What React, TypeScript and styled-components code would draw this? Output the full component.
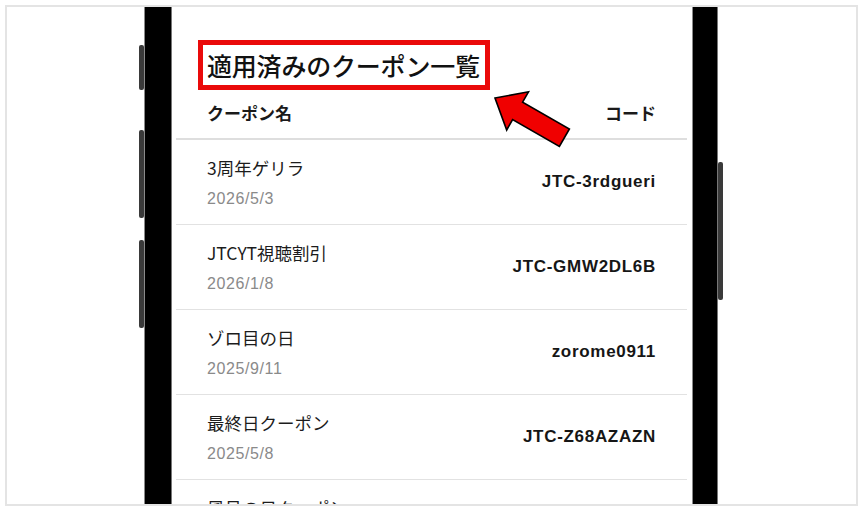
import styled, { createGlobalStyle } from 'styled-components';

const coupons = [
  { name: '3周年ゲリラ', date: '2026/5/3', code: 'JTC-3rdgueri' },
  { name: 'JTCYT視聴割引', date: '2026/1/8', code: 'JTC-GMW2DL6B' },
  { name: 'ゾロ目の日', date: '2025/9/11', code: 'zorome0911' },
  { name: '最終日クーポン', date: '2025/5/8', code: 'JTC-Z68AZAZN' },
  { name: '風呂の日クーポン', date: '2025/2/6', code: 'JTC-FURO0206' },
];

const GlobalStyle = createGlobalStyle`
  html, body {
    margin: 0;
    padding: 0;
    background: #ffffff;
  }
  body {
    font-family: "Noto Sans CJK JP", "Noto Sans", sans-serif;
    color: #111;
  }
`;

const Frame = styled.div`
  box-sizing: border-box;
  margin: 5px 0 0 5px;
  width: 853px;
  height: 501px;
  border: 2px solid #e4e4e4;
  overflow: hidden;
  display: flex;
  padding-left: 132px;
`;

const Rail = styled.div<{ $top: number }>`
  width: 5px;
  display: flex;
  flex-direction: column;
  padding-top: ${({ $top }) => $top}px;
`;

const SideButton = styled.div<{ $height: number; $gap?: number }>`
  height: ${({ $height }) => $height}px;
  margin-top: ${({ $gap }) => $gap ?? 0}px;
  background: #3a3a3a;
  border-radius: 2px;
`;

const Bezel = styled.div<{ $width: number }>`
  width: ${({ $width }) => $width}px;
  height: 100%;
  background: #000;
  box-shadow: inset 1px 0 0 #8a8a8a, inset -1px 0 0 #777;
`;

const Screen = styled.div`
  position: relative;
  width: 520px;
  height: 100%;
  background: #fff;
  display: flex;
  flex-direction: column;
  padding-top: 33px;
  box-sizing: border-box;
  overflow: hidden;
`;

const TitleBox = styled.div`
  flex-shrink: 0;
  align-self: flex-start;
  margin-left: 26px;
  box-sizing: border-box;
  width: 292px;
  height: 50px;
  border: 5px solid #ea0a0a;
  padding: 0 4px;
`;

const Title = styled.h1`
  margin: 0;
  font-size: 25px;
  font-weight: 500;
  line-height: 40px;
  white-space: nowrap;
  letter-spacing: -0.2px;
`;

const Arrow = styled.svg`
  position: absolute;
  left: 318px;
  top: 75px;
  overflow: visible;
`;

const HeaderRow = styled.div`
  flex-shrink: 0;
  margin: 0 5px 0 4px;
  height: 50px;
  box-sizing: border-box;
  padding: 0 31px 3px;
  display: flex;
  justify-content: space-between;
  align-items: center;
  border-bottom: 2px solid #dedede;
  font-size: 17px;
  font-weight: 700;
  color: #1a1a1a;
`;

const Row = styled.div`
  margin: 0 5px 0 4px;
  height: 85px;
  flex-shrink: 0;
  box-sizing: border-box;
  padding: 0 31px;
  display: flex;
  justify-content: space-between;
  align-items: center;
  border-bottom: 1px solid #e2e2e2;
`;

const Info = styled.div`
  display: flex;
  flex-direction: column;
  gap: 8px;
  padding-top: 2px;
`;

const Name = styled.div`
  font-size: 17.5px;
  line-height: 24px;
  color: #1c1c1c;
`;

const DateText = styled.div`
  font-family: "Liberation Sans", "Noto Sans CJK JP", sans-serif;
  font-size: 16px;
  line-height: 22px;
  letter-spacing: 0.6px;
  color: #8a8a8a;
`;

const Code = styled.div`
  font-family: "Liberation Sans", "Noto Sans CJK JP", sans-serif;
  font-size: 17px;
  font-weight: 700;
  letter-spacing: 0.7px;
  color: #161616;
`;

export default function App() {
  return (
    <>
      <GlobalStyle />
      <Frame>
        <Rail $top={38}>
          <SideButton $height={45} />
          <SideButton $height={88} $gap={40} />
          <SideButton $height={88} $gap={22} />
        </Rail>
        <Bezel $width={28} />
        <Screen>
          <TitleBox>
            <Title>適用済みのクーポン一覧</Title>
          </TitleBox>
          <Arrow width="80" height="70" viewBox="0 0 80 70">
            <polygon
              points="5,16 38.5,9.8 32.6,20.2 79.4,47 69.4,64.4 22.6,37.6 16.7,48"
              fill="#f00000"
              stroke="#000"
              strokeWidth="1.6"
              strokeLinejoin="miter"
            />
          </Arrow>
          <HeaderRow>
            <span>クーポン名</span>
            <span>コード</span>
          </HeaderRow>
          {coupons.map((c) => (
            <Row key={c.code}>
              <Info>
                <Name>{c.name}</Name>
                <DateText>{c.date}</DateText>
              </Info>
              <Code>{c.code}</Code>
            </Row>
          ))}
        </Screen>
        <Bezel $width={26} />
        <Rail $top={155}>
          <SideButton $height={138} />
        </Rail>
      </Frame>
    </>
  );
}
